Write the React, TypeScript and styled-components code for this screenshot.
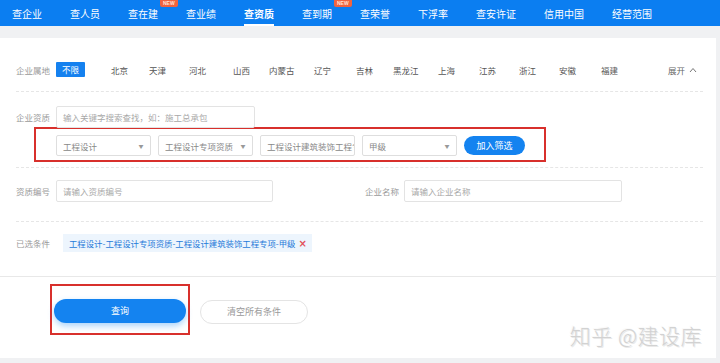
import React from "react";
import styled, { createGlobalStyle } from "styled-components";

const Global = createGlobalStyle`
  html, body { margin: 0; padding: 0; background: #f0f1f3; }
  body { font-family: "Noto Sans CJK SC", "Noto Sans", sans-serif; width: 720px; height: 363px; overflow: hidden; }
  * { box-sizing: border-box; }
`;

const Nav = styled.nav`
  height: 26px;
  background: #0b7ef1;
  display: flex;
  align-items: stretch;
  padding-left: 12px;
`;

const NavItem = styled.div<{ $active?: boolean }>`
  position: relative;
  display: flex;
  align-items: center;
  margin-right: 28px;
  color: #fff;
  font-size: 10px;
  font-weight: ${(p) => (p.$active ? 700 : 400)};
  white-space: nowrap;
  &::after {
    content: "";
    display: ${(p) => (p.$active ? "block" : "none")};
    position: absolute;
    left: 0;
    right: 0;
    bottom: 0;
    height: 2px;
    background: #fff;
  }
`;

const NewBadge = styled.span`
  position: absolute;
  top: 0;
  left: 100%;
  margin-left: 2px;
  background: #f1633f;
  color: #ffe3d8;
  font-family: "Liberation Sans", sans-serif;
  font-size: 5px;
  font-weight: 700;
  line-height: 7px;
  padding: 0 3px;
  border-radius: 0 0 2px 2px;
`;

const Main = styled.main`
  padding: 12px 4px 0 0;
`;

const Card = styled.section`
  background: #fff;
  height: 320px;
  display: flex;
  flex-direction: column;
`;

const Body = styled.div`
  padding: 0 13px 0 16px;
`;

const Section = styled.div<{ $pt: number; $pb: number; $dashed?: boolean }>`
  padding: ${(p) => `${p.$pt}px 0 ${p.$pb}px`};
  border-bottom: ${(p) => (p.$dashed ? "1px dashed #e6e6e6" : "none")};
`;

const Row = styled.div`
  display: flex;
  align-items: center;
`;

const Label = styled.span<{ $w?: number }>`
  width: ${(p) => p.$w ?? 40}px;
  flex: none;
  font-size: 8.5px;
  color: #9a9a9a;
  white-space: nowrap;
`;

const AllBadge = styled.span`
  background: #1581ef;
  color: #fff;
  font-size: 8.5px;
  padding: 0 6px;
  height: 15px;
  line-height: 15px;
  border-radius: 1px;
  margin-right: 26px;
`;

const City = styled.span<{ $w: number }>`
  width: ${(p) => p.$w}px;
  font-size: 8.5px;
  color: #555;
  white-space: nowrap;
`;

const Expand = styled.span`
  margin-left: auto;
  margin-right: 6px;
  font-size: 8.5px;
  color: #666;
  display: flex;
  align-items: center;
  gap: 4px;
`;

const Input = styled.div<{ $w: number }>`
  width: ${(p) => p.$w}px;
  height: 22px;
  border: 1px solid #e3e3e3;
  border-radius: 2px;
  padding: 0 6px;
  display: flex;
  align-items: center;
  font-size: 8.5px;
  color: #a8a8a8;
  white-space: nowrap;
`;

const Highlight = styled.div<{ $w: number }>`
  width: ${(p) => p.$w}px;
  border: 2px solid #d8302c;
  display: flex;
  align-items: center;
  gap: 7px;
`;

const SelectRowBox = styled(Highlight)`
  margin: -1px 0 0 18px;
  padding: 6px 0 4px 20px;
`;

const Select = styled.div`
  width: 95px;
  height: 21px;
  border: 1px solid #dedede;
  border-radius: 2px;
  display: flex;
  align-items: center;
  padding: 0 0 0 6px;
  font-size: 8.5px;
  color: #888;
  overflow: hidden;
  white-space: nowrap;
`;

const SelectText = styled.span`
  flex: 1;
  overflow: hidden;
`;

const Caret = styled.span`
  flex: none;
  width: 18px;
  text-align: center;
  font-size: 5px;
  color: #999;
`;

const PillButton = styled.button<{ $w: number; $h: number }>`
  width: ${(p) => p.$w}px;
  height: ${(p) => p.$h}px;
  border: none;
  border-radius: ${(p) => p.$h / 2}px;
  background: #1483f0;
  color: #fff;
  font-family: inherit;
  font-size: 9px;
  padding: 0;
  cursor: pointer;
`;

const MainButton = styled(PillButton)`
  box-shadow: 0 3px 6px rgba(20, 131, 240, 0.35);
`;

const GhostButton = styled.button`
  width: 108px;
  height: 24px;
  border: 1px solid #e4e4e4;
  border-radius: 12px;
  background: #fff;
  color: #999;
  font-family: inherit;
  font-size: 9px;
  padding: 0;
`;

const Group = styled.div<{ $w: number }>`
  width: ${(p) => p.$w}px;
  display: flex;
  align-items: center;
`;

const Tag = styled.div`
  margin-left: 7px;
  height: 18px;
  background: #edf5fd;
  padding: 0 5px 0 6px;
  display: flex;
  align-items: center;
  gap: 3px;
  font-size: 8.4px;
  color: #1f7ad9;
  white-space: nowrap;
`;

const Close = styled.span`
  color: #e2505a;
  font-size: 10px;
  font-weight: 700;
  font-family: "DejaVu Sans", sans-serif;
`;

const Footer = styled.div`
  position: relative;
  flex: 1;
  border-top: 1px solid #e8e8e8;
  padding: 7px 0 0 50px;
  display: flex;
  align-items: flex-start;
  gap: 10px;
`;

const ButtonBox = styled.div`
  border: 2px solid #d8302c;
  padding: 9px 2px 10px 2px;
`;

const GhostWrap = styled.div`
  padding-top: 12px;
`;

const Watermark = styled.div`
  position: absolute;
  right: 14px;
  bottom: 10px;
  font-size: 21px;
  line-height: 26px;
  color: #d2d2d2;
  font-weight: 300;
  letter-spacing: 0.5px;
  text-shadow: 1px 1px 0 #e9e9e9, -1px -1px 0 #fafafa;
`;

const navItems: { t: string; isNew?: boolean; active?: boolean }[] = [
  { t: "查企业" },
  { t: "查人员" },
  { t: "查在建", isNew: true },
  { t: "查业绩" },
  { t: "查资质", active: true },
  { t: "查到期", isNew: true },
  { t: "查荣誉" },
  { t: "下浮率" },
  { t: "查安许证" },
  { t: "信用中国" },
  { t: "经营范围" },
];

const cities: [string, number][] = [
  ["北京", 38],
  ["天津", 40],
  ["河北", 44],
  ["山西", 36],
  ["内蒙古", 45],
  ["辽宁", 42],
  ["吉林", 37],
  ["黑龙江", 45],
  ["上海", 41],
  ["江苏", 40],
  ["浙江", 40],
  ["安徽", 42],
  ["福建", 40],
];

export default function App() {
  return (
    <>
      <Global />
      <Nav>
        {navItems.map((n) => (
          <NavItem key={n.t} $active={n.active}>
            {n.t}
            {n.isNew && <NewBadge>NEW</NewBadge>}
          </NavItem>
        ))}
      </Nav>
      <Main>
        <Card>
          <Body>
            <Section $pt={24} $pb={14} $dashed>
              <Row>
                <Label>企业属地</Label>
                <AllBadge>不限</AllBadge>
                {cities.map(([c, w]) => (
                  <City key={c} $w={w}>
                    {c}
                  </City>
                ))}
                <Expand>
                  展开
                  <svg width="8" height="6" viewBox="0 0 8 6">
                    <path d="M1 5 L4 1.5 L7 5" fill="none" stroke="#777" strokeWidth="1" />
                  </svg>
                </Expand>
              </Row>
            </Section>
            <Section $pt={14} $pb={5} $dashed>
              <Row>
                <Label>企业资质</Label>
                <Input $w={199}>输入关键字搜索查找，如：施工总承包</Input>
              </Row>
              <SelectRowBox $w={512}>
                <Select>
                  <SelectText>工程设计</SelectText>
                  <Caret>▼</Caret>
                </Select>
                <Select>
                  <SelectText>工程设计专项资质</SelectText>
                  <Caret>▼</Caret>
                </Select>
                <Select>
                  <SelectText>工程设计建筑装饰工程专项</SelectText>
                </Select>
                <Select>
                  <SelectText>甲级</SelectText>
                  <Caret>▼</Caret>
                </Select>
                <PillButton $w={61} $h={19}>加入筛选</PillButton>
              </SelectRowBox>
            </Section>
            <Section $pt={12} $pb={19} $dashed>
              <Row>
                <Group $w={349}>
                  <Label>资质编号</Label>
                  <Input $w={217}>请输入资质编号</Input>
                </Group>
                <Group $w={300}>
                  <Label $w={39}>企业名称</Label>
                  <Input $w={218}>请输入企业名称</Input>
                </Group>
              </Row>
            </Section>
            <Section $pt={12} $pb={24}>
              <Row>
                <Label>已选条件</Label>
                <Tag>
                  工程设计-工程设计专项资质-工程设计建筑装饰工程专项-甲级
                  <Close>×</Close>
                </Tag>
              </Row>
            </Section>
          </Body>
          <Footer>
            <ButtonBox>
              <MainButton $w={132} $h={24}>查询</MainButton>
            </ButtonBox>
            <GhostWrap>
              <GhostButton>清空所有条件</GhostButton>
            </GhostWrap>
            <Watermark>知乎 @建设库</Watermark>
          </Footer>
        </Card>
      </Main>
    </>
  );
}
